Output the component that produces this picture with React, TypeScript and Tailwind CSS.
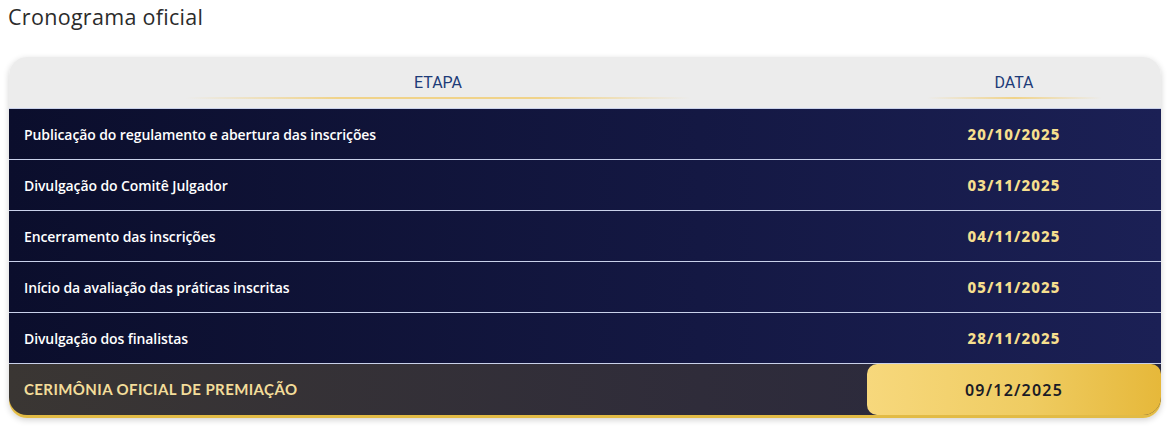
const rows = [
  { etapa: "Publicação do regulamento e abertura das inscrições", data: "20/10/2025" },
  { etapa: "Divulgação do Comitê Julgador", data: "03/11/2025" },
  { etapa: "Encerramento das inscrições", data: "04/11/2025" },
  { etapa: "Início da avaliação das práticas inscritas", data: "05/11/2025" },
  { etapa: "Divulgação dos finalistas", data: "28/11/2025" },
];

export default function App() {
  return (
    <div className="min-h-[426px] bg-white px-[9px] pt-[2px] font-['Open_Sans',sans-serif]">
      <h2 className="-ml-px text-[21.5px] font-medium leading-[29px] tracking-[0.3px] text-[#2b2b2b]">
        Cronograma oficial
      </h2>

      <div className="mt-[26px] w-[1152px] overflow-hidden rounded-[18px] shadow-[0_2px_6px_rgba(0,0,0,0.18)]">
        {/* header */}
        <div className="grid h-[51px] grid-cols-[858px_294px] bg-[#ececec] font-['Roboto',sans-serif] text-[16px] text-[#1d3b78]">
          <div className="flex flex-col items-center pt-[16px]">
            <span className="leading-[19px]">ETAPA</span>
            <div className="mt-[5px] h-[2px] w-[505px] bg-[linear-gradient(90deg,transparent,#f0d38a_30%,#f0d38a_70%,transparent)]" />
          </div>
          <div className="flex flex-col items-center pt-[16px]">
            <span className="leading-[19px]">DATA</span>
            <div className="mt-[5px] h-[2px] w-[175px] bg-[linear-gradient(90deg,transparent,#f0d38a_50%,transparent)]" />
          </div>
        </div>

        {/* rows */}
        {rows.map((r) => (
          <div
            key={r.data}
            className="grid h-[51px] grid-cols-[858px_294px] items-center border-t border-[#c9d1ea] bg-[linear-gradient(90deg,#0b0e2c,#141843_60%,#1b2055)]"
          >
            <div className="pl-[15px] text-[14px] font-semibold tracking-[-0.1px] text-white">{r.etapa}</div>
            <div className="text-center font-['Noto_Sans',sans-serif] text-[15px] font-extrabold tracking-[1.1px] text-[#f6df8e]">
              {r.data}
            </div>
          </div>
        ))}

        {/* final row */}
        <div className="border-t border-[#c9d1ea] bg-[#e2bb45] pb-[3px]">
          <div className="grid h-[51px] grid-cols-[858px_294px] items-stretch rounded-b-[18px] bg-[linear-gradient(90deg,#3a3633,#2f2c3a_60%,#28283e)]">
            <div className="flex items-center pl-[15px] font-['Lato',sans-serif] text-[15px] font-bold tracking-[0.4px] text-[#f3dd9a]">
              CERIMÔNIA OFICIAL DE PREMIAÇÃO
            </div>
            <div className="flex items-center justify-center rounded-[10px] rounded-br-[18px] bg-[linear-gradient(90deg,#f7d87c,#efcc62_55%,#e6b83a)] font-['Noto_Sans',sans-serif] text-[16px] font-semibold tracking-[1.2px] text-[#1b1b26]">
              09/12/2025
            </div>
          </div>
        </div>
      </div>
    </div>
  );
}
